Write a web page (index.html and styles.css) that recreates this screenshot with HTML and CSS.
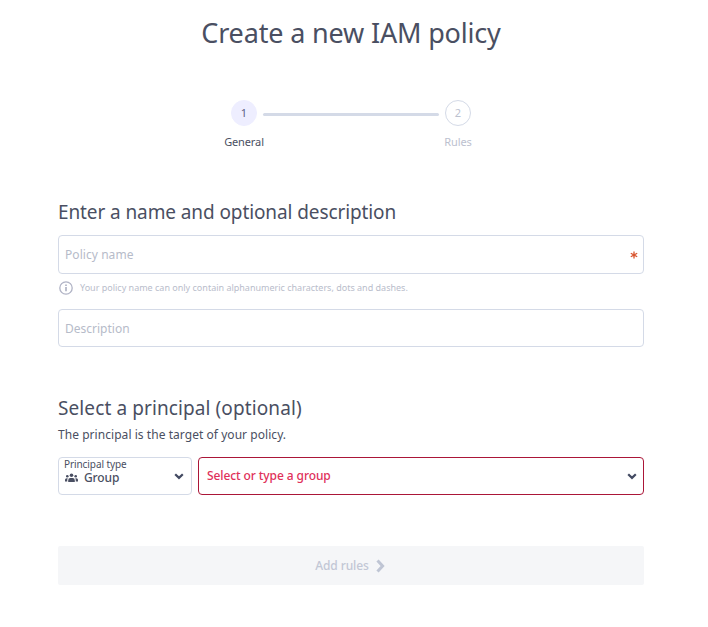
FILE: index.html
```html
<!DOCTYPE html>
<html lang="en">
<head>
<meta charset="utf-8">
<title>Create a new IAM policy</title>
<link rel="stylesheet" href="styles.css">
</head>
<body>
<main class="page">
  <h1 class="title"><span>Create a new IAM policy</span></h1>
  <ol class="stepper">
    <li class="step step-active"><span class="dot">1</span><span class="step-label">General</span></li>
    <li class="line"></li>
    <li class="step"><span class="dot">2</span><span class="step-label rules">Rules</span></li>
  </ol>
  <section class="general">
    <h2 class="heading h-name">Enter a name and optional description</h2>
    <div class="field"><span class="placeholder p-name">Policy name</span>
      <svg class="required" width="8" height="8" viewBox="0 0 8 8"><path d="M4 .5v7M.8 2.2l6.4 3.6M7.2 2.2L.8 5.8" stroke="#d8552f" stroke-width="1.3"/></svg>
    </div>
    <div class="hint">
      <svg width="14" height="14" viewBox="0 0 14 14"><circle cx="7" cy="7" r="6.2" fill="none" stroke="#b0b3c5" stroke-width="1.3"/><path d="M7 6.1v4.2M7 3.6v1.5" stroke="#b0b3c5" stroke-width="1.7"/></svg>
      <span>Your policy name can only contain alphanumeric characters, dots and dashes.</span>
    </div>
    <div class="field"><span class="placeholder p-desc">Description</span></div>
  </section>
  <section class="principal">
    <h2 class="heading h-principal">Select a principal (optional)</h2>
    <p class="sub">The principal is the target of your policy.</p>
    <div class="selects">
      <div class="select type">
        <div class="type-text">
          <span class="type-label">Principal type</span>
          <span class="type-value">
            <svg width="13" height="10" viewBox="0 0 13 10" fill="#4a4f62"><circle cx="6.5" cy="2.3" r="1.8"/><circle cx="2.3" cy="3.2" r="1.3"/><circle cx="10.7" cy="3.2" r="1.3"/><path d="M3.2 9V7.2Q3.2 5 5.3 5h2.4q2.1 0 2.1 2.2V9zM0 8.6V6.8Q0 5.2 1.7 5.2h1Q2.2 6 2.2 8.6zM13 8.6V6.8q0-1.6-1.7-1.6h-1q.5.8.5 3.4z"/></svg>
            <b>Group</b>
          </span>
        </div>
        <svg class="chevron" width="10" height="7" viewBox="0 0 10 7"><path d="M1.2 1.2L5 4.9l3.8-3.7" fill="none" stroke="#434a62" stroke-width="2.2"/></svg>
      </div>
      <div class="select group"><span class="group-text">Select or type a group</span>
        <svg class="chevron" width="10" height="7" viewBox="0 0 10 7"><path d="M1.2 1.2L5 4.9l3.8-3.7" fill="none" stroke="#434a62" stroke-width="2.2"/></svg>
      </div>
    </div>
  </section>
  <button class="submit" disabled><span>Add rules</span>
    <svg width="9" height="14" viewBox="0 0 9 14"><path d="M1.5 1.5L6.6 7l-5.1 5.5" fill="none" stroke="#bfc5d4" stroke-width="3"/></svg>
  </button>
</main>
</body>
</html>
```
FILE: styles.css
```css
* { box-sizing: border-box; }
body { margin: 0; background: #fff; color: #4a4f62; font-family: "Noto Sans", "Open Sans", sans-serif; font-size: 12px; }
.page { width: 586px; margin-left: 58px; padding-top: 13px; }
h1, h2, p, ol { margin: 0; padding: 0; font-weight: 400; white-space: nowrap; }
.title { text-align: center; font-size: 27px; line-height: 40px; letter-spacing: -.17px; }
.stepper { display: flex; list-style: none; justify-content: center; gap: 6px; margin-top: 47px; }
.step { width: 26px; display: flex; flex-direction: column; align-items: center; color: #bcc1cf; }
.dot { width: 26px; height: 26px; border: 1px solid #d4dae7; border-radius: 50%; display: flex; align-items: center; justify-content: center; font-size: 11px; padding-bottom: 1px; }
.step-active { color: #4a4f62; }
.step-active .dot { background: #eeeeff; border-color: #eeeeff; color: #5e6084; }
.step-label { font-size: 11px; line-height: 16px; margin-top: 8px; letter-spacing: -.12px; }
.line { width: 176px; height: 3px; margin-top: 13px; border-radius: 2px; background: #d4dae7; }
.general { margin-top: 48px; }
.heading { font-size: 19px; line-height: 28px; }
.h-name { letter-spacing: -.1px; }
.h-principal { letter-spacing: .1px; }
.field { height: 38px; border: 1px solid #d4dae7; border-radius: 4px; display: flex; align-items: center; justify-content: space-between; padding: 0 5px 0 6px; }
.h-name + .field { height: 39px; margin-top: 9px; }
.placeholder { font-size: 12px; color: #b6bbc9; }
.p-name { letter-spacing: .06px; }
.required { margin-top: 1px; }
.hint { display: flex; align-items: center; gap: 7px; height: 14px; margin: 7px 0 14px 1px; font-size: 9px; color: #b9bdcb; white-space: nowrap; }
.hint span { padding-bottom: 1px; }
.principal { margin-top: 47px; }
.sub { font-size: 12px; line-height: 18px; margin-top: 4px; letter-spacing: .05px; }
.selects { display: flex; gap: 6px; margin-top: 13px; }
.select { height: 38px; border: 1px solid #d4dae7; border-radius: 4px; display: flex; align-items: center; justify-content: space-between; padding: 0 6px 0 5px; }
.type { width: 134px; padding-right: 7px; }
.type-text { display: flex; flex-direction: column; align-self: flex-start; }
.type-label { font-size: 10px; line-height: 13px; letter-spacing: -.08px; }
.type-value { display: flex; align-items: center; gap: 6px; line-height: 14px; padding-left: 1px; }
.type-value b { font-weight: 500; letter-spacing: -.1px; }
.group { flex: 1; border-color: #ab1638; color: #e0305a; font-weight: 500; padding-left: 8px; }
.group-text { letter-spacing: -.09px; padding-bottom: 1px; }
.submit { display: flex; width: 100%; height: 39px; margin-top: 51px; padding: 0 2px 0 0; border: 0; border-radius: 2px; background: #f5f6f8; align-items: center; justify-content: center; gap: 7px; font: 500 12px "Noto Sans", sans-serif; letter-spacing: -.1px; color: #c2c7d5; }
```
